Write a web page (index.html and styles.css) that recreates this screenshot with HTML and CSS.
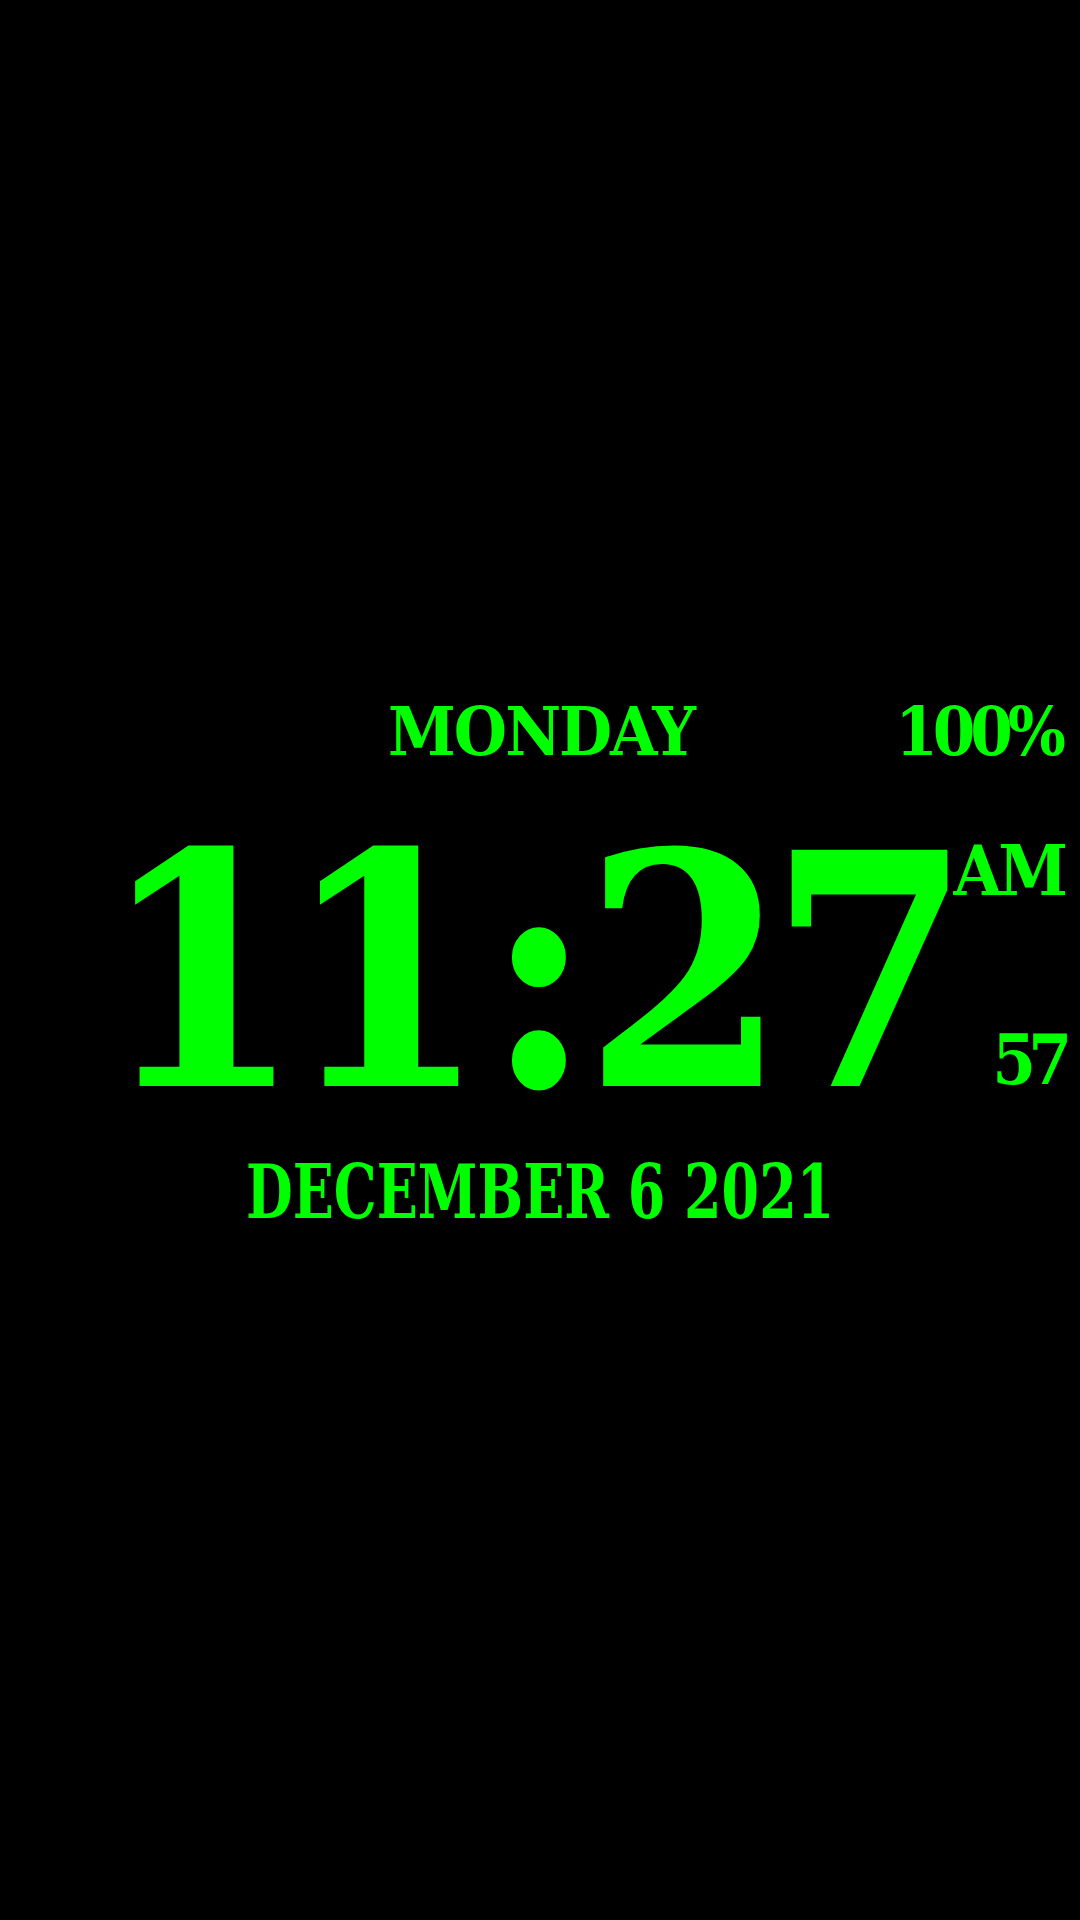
FILE: index.html
```html
<!DOCTYPE html>
<html lang="en">
<head>
<meta charset="utf-8">
<title>Clock</title>
<link rel="stylesheet" href="styles.css">
</head>
<body>
<main class="clock">
  <div class="row row-top">
    <div class="cell"></div>
    <div class="day">MONDAY</div>
    <div class="cell cell-right"><span class="battery">100%</span></div>
  </div>
  <div class="row row-time">
    <div class="cell"></div>
    <div class="time"><span class="hh">11</span><span class="colon">:</span><span class="mm">27</span></div>
    <div class="cell cell-right side">
      <span class="ampm">AM</span>
      <span class="seconds">57</span>
    </div>
  </div>
  <div class="row row-date">
    <div class="date">DECEMBER 6 2021</div>
  </div>
</main>
</body>
</html>
```
FILE: styles.css
```css
html, body {
  margin: 0;
  padding: 0;
  background: #010001;
}
body {
  width: 1080px;
  height: 1920px;
  overflow: hidden;
  font-family: "DejaVu Serif", serif;
  font-stretch: condensed;
  font-weight: bold;
  color: #00ff00;
}
.clock {
  display: flex;
  flex-direction: column;
  padding-top: 691px;
}
.row {
  display: grid;
  grid-template-columns: 1fr auto 1fr;
}
.cell-right {
  display: flex;
  justify-content: flex-end;
  padding-right: 16px;
}
.day, .battery {
  font-size: 68px;
  line-height: 80px;
}
.day {
  letter-spacing: -2px;
  margin-right: -2px;
}
.battery {
  letter-spacing: -5px;
  margin-right: 3px;
}
.row-time {
  margin-top: 51px;
  height: 300px;
}
.time {
  font-size: 324px;
  line-height: 300px;
  letter-spacing: -18px;
  margin-right: 0;
}
.hh {
  margin-right: 16px;
}
.colon {
  margin-right: 9px;
}
.side {
  flex-direction: column;
  align-items: flex-end;
  justify-content: space-between;
  padding-top: 9px;
  padding-bottom: 22px;
}
.ampm, .seconds {
  font-size: 70px;
  line-height: 80px;
}
.ampm {
  letter-spacing: -4px;
}
.seconds {
  letter-spacing: -8px;
}
.row-date {
  display: flex;
  justify-content: center;
  margin-top: 25px;
}
.date {
  font-size: 74px;
  line-height: 90px;
  transform: scaleX(0.81);
}
```
